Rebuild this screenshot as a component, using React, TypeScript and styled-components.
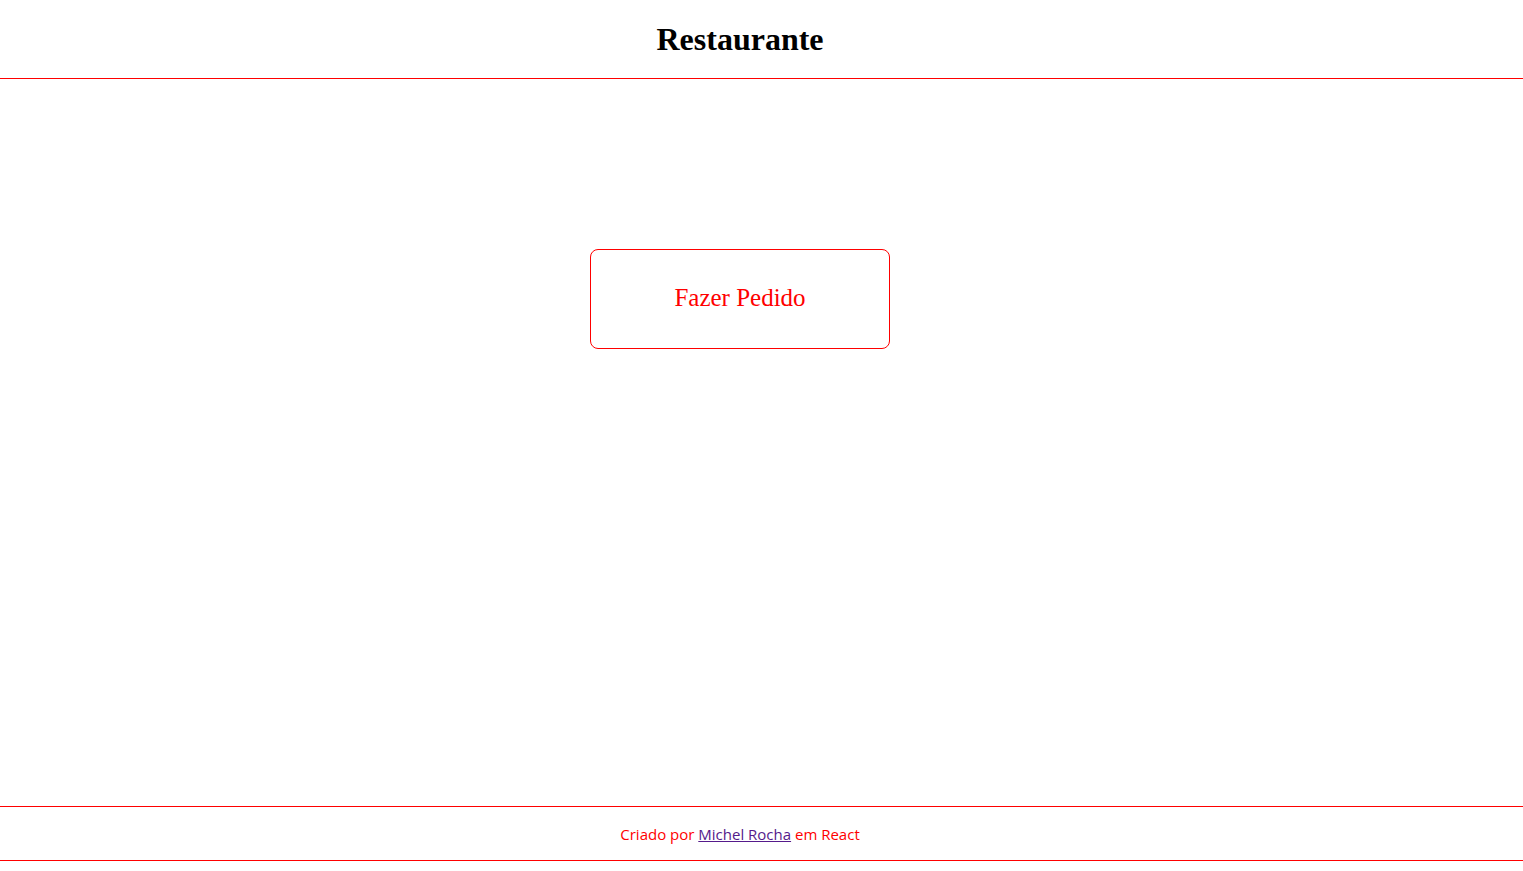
import React from "react";
import styled, { createGlobalStyle } from "styled-components";

const Global = createGlobalStyle`
  html, body { margin: 0; padding: 0; background: #fff; }
  body { font-family: "Liberation Serif", "Times New Roman", serif; }
`;

const Page = styled.div`
  display: flex;
  flex-direction: column;
  width: 100%;
`;

const Header = styled.header`
  height: 78px;
  border-bottom: 1px solid red;
  display: flex;
  align-items: center;
  justify-content: center;
  padding-right: 43px;
`;

const Title = styled.h1`
  margin: 0 0 1px;
  font-family: "Liberation Serif", "Times New Roman", serif;
  font-size: 32px;
  font-weight: bold;
  color: #000;
  line-height: 1;
`;

const Main = styled.main`
  height: 727px;
  display: flex;
  justify-content: center;
  align-items: flex-start;
  padding-top: 170px;
  padding-right: 43px;
  box-sizing: border-box;
`;

const OrderButton = styled.button`
  width: 300px;
  height: 100px;
  border: 1px solid red;
  border-radius: 8px;
  background: #fff;
  color: red;
  font-family: "Liberation Serif", "Times New Roman", serif;
  font-size: 25px;
  padding: 0 0 2px;
  cursor: pointer;
`;

const Footer = styled.footer`
  height: 53px;
  border-top: 1px solid red;
  border-bottom: 1px solid red;
  display: flex;
  align-items: center;
  justify-content: center;
  padding-right: 43px;
  font-family: "Open Sans", "Noto Sans", sans-serif;
  font-size: 15px;
  color: red;
`;

const Credit = styled.p`
  margin: 0;
`;

const Author = styled.a`
  color: #551a8b;
`;

export default function App() {
  return (
    <>
      <Global />
      <Page>
        <Header>
          <Title>Restaurante</Title>
        </Header>
        <Main>
          <OrderButton>Fazer Pedido</OrderButton>
        </Main>
        <Footer>
          <Credit>
            Criado por <Author href="#">Michel Rocha</Author> em React
          </Credit>
        </Footer>
      </Page>
    </>
  );
}
